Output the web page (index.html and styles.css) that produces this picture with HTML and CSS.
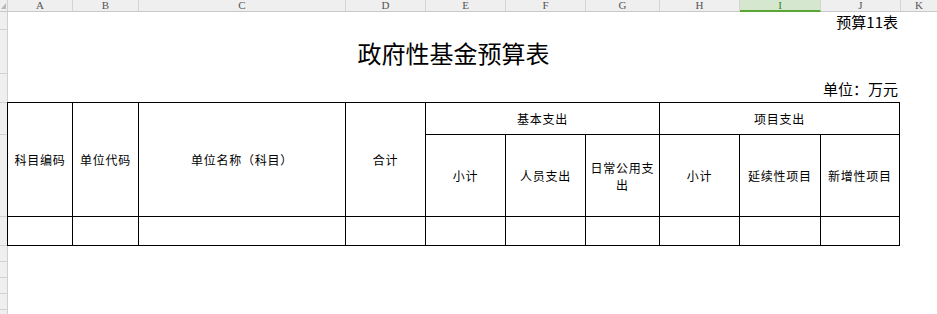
FILE: index.html
```html
<!DOCTYPE html>
<html lang="zh-CN">
<head>
<meta charset="utf-8">
<title>政府性基金预算表</title>
<link rel="stylesheet" href="styles.css">
</head>
<body>
<div class="colhead">
  <div class="corner"><span class="tri"></span></div>
  <div class="ch w-a">A</div>
  <div class="ch w-b">B</div>
  <div class="ch w-c">C</div>
  <div class="ch w-d">D</div>
  <div class="ch w-e">E</div>
  <div class="ch w-f">F</div>
  <div class="ch w-g">G</div>
  <div class="ch w-h">H</div>
  <div class="ch w-i sel">I</div>
  <div class="ch w-j">J</div>
  <div class="ch w-k">K</div>
</div>
<div class="sheet">
  <div class="rowhead">
    <div class="rh h1"></div>
    <div class="rh h2"></div>
    <div class="rh h3"></div>
    <div class="rh h4"></div>
    <div class="rh h5"></div>
    <div class="rh h6"></div>
    <div class="rh h7"></div>
    <div class="rh h7"></div>
    <div class="rh h7"></div>
    <div class="rh h7"></div>
  </div>
  <div class="content">
    <div class="r1"><span>预算11表</span></div>
    <div class="r2">政府性基金预算表</div>
    <div class="r3">单位：万元</div>
    <div class="grid">
      <div class="cell span2">科目编码</div>
      <div class="cell span2">单位代码</div>
      <div class="cell span2">单位名称（科目）</div>
      <div class="cell span2">合计</div>
      <div class="cell span3c">基本支出</div>
      <div class="cell span3c">项目支出</div>
      <div class="cell">小计</div>
      <div class="cell">人员支出</div>
      <div class="cell">日常公用支出</div>
      <div class="cell">小计</div>
      <div class="cell">延续性项目</div>
      <div class="cell">新增性项目</div>
      <div class="cell"></div>
      <div class="cell"></div>
      <div class="cell"></div>
      <div class="cell"></div>
      <div class="cell"></div>
      <div class="cell"></div>
      <div class="cell"></div>
      <div class="cell"></div>
      <div class="cell"></div>
      <div class="cell"></div>
    </div>
  </div>
</div>
</body>
</html>
```
FILE: styles.css
```css
* { box-sizing: border-box; }
html, body { margin: 0; padding: 0; background: #fff; }
body {
  width: 937px;
  height: 314px;
  overflow: hidden;
  font-family: "Noto Sans CJK SC", "Liberation Sans", sans-serif;
  color: #000;
}
.colhead {
  display: flex;
  height: 12px;
  background: #efefef;
  border-bottom: 1px solid #c9c9c9;
}
.corner {
  width: 8px;
  flex: none;
  border-right: 1px solid #d0d0d0;
  display: flex;
  align-items: flex-end;
  justify-content: flex-end;
  padding: 0 1px 2px 0;
}
.tri {
  width: 0;
  height: 0;
  border-left: 5px solid transparent;
  border-bottom: 6px solid #b8b8b8;
}
.ch {
  flex: none;
  border-right: 1px solid #d4d4d4;
  font-family: "Liberation Serif", serif;
  font-size: 11px;
  line-height: 11px;
  color: #555;
  text-align: center;
}
.w-a { width: 65px; }
.w-b { width: 66px; }
.w-c { width: 207px; }
.w-d { width: 80px; }
.w-e { width: 80px; }
.w-f { width: 80px; }
.w-g { width: 74px; }
.w-h { width: 80px; }
.w-i { width: 81px; }
.w-j { width: 80px; }
.w-k { flex: 1; border-right: none; }
.ch.sel {
  background: #d5e7cf;
  color: #2f8a1e;
  height: 12px;
  border-bottom: 2px solid #5ba633;
  line-height: 10px;
}
.sheet {
  display: flex;
}
.rowhead {
  width: 8px;
  flex: none;
  background: #efefef;
  border-right: 1px solid #d0d0d0;
  height: 302px;
}
.rh { border-bottom: 1px solid #d0d0d0; }
.h1 { height: 18px; }
.h2 { height: 44px; }
.h3 { height: 29px; }
.h4 { height: 32px; }
.h5 { height: 82px; }
.h6 { height: 29px; }
.h7 { height: 16px; }
.content {
  width: 892px;
  flex: none;
}
.r1 {
  height: 18px;
  display: flex;
  align-items: flex-end;
  justify-content: flex-end;
  padding-right: 2px;
  font-size: 15px;
  line-height: 15px;
}
.r1 span { padding-bottom: 1px; }
.r2 {
  height: 44px;
  margin-left: -1px;
  display: flex;
  align-items: center;
  justify-content: center;
  font-family: "Noto Sans CJK SC", "Liberation Serif", serif;
  font-size: 24px;
  line-height: 24px;
  padding-top: 1px;
}
.r3 {
  height: 28px;
  display: flex;
  align-items: center;
  justify-content: flex-end;
  padding-right: 2px;
  font-size: 15px;
  line-height: 15px;
}
.grid {
  margin-left: -1px;
  width: 893px;
  display: grid;
  grid-template-columns: 64px 65px 206px 79px 79px 79px 73px 79px 80px 78px;
  grid-template-rows: 31px 81px 28px;
  gap: 1px;
  background: #000;
  border: 1px solid #000;
}
.cell {
  background: #fff;
  display: flex;
  align-items: center;
  justify-content: center;
  text-align: center;
  font-size: 12px;
  line-height: 17px;
  letter-spacing: 0.75px;
  padding: 0 2px;
}
.span2 { grid-row: span 2; }
.span3c { grid-column: span 3; }
```
